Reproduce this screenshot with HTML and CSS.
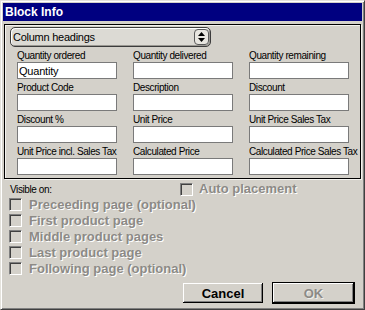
FILE: index.html
```html
<!DOCTYPE html>
<html lang="en">
<head>
    <meta charset="UTF-8">
    <title>Block Info</title>
    <link rel="stylesheet" href="styles.css">
</head>
<body>
    <div class="window">
        <div class="titlebar">Block Info</div>

        <div class="group">
            <div class="popup">
                <span class="popup-text">Column headings</span>
                <span class="popup-arrows">
                    <svg width="9" height="12" viewBox="0 0 9 12">
                        <polygon points="4.5,1 8,5 1,5" fill="#000"/>
                        <polygon points="1,7 8,7 4.5,11" fill="#000"/>
                    </svg>
                </span>
            </div>

            <div class="fields">
                <div class="field"><label>Quantity ordered</label><input type="text" value="Quantity"></div>
                <div class="field"><label>Quantity delivered</label><input type="text"></div>
                <div class="field"><label>Quantity remaining</label><input type="text"></div>
                <div class="field"><label>Product Code</label><input type="text"></div>
                <div class="field"><label>Description</label><input type="text"></div>
                <div class="field"><label>Discount</label><input type="text"></div>
                <div class="field"><label>Discount %</label><input type="text"></div>
                <div class="field"><label>Unit Price</label><input type="text"></div>
                <div class="field"><label>Unit Price Sales Tax</label><input type="text"></div>
                <div class="field"><label>Unit Price incl. Sales Tax</label><input type="text"></div>
                <div class="field"><label>Calculated Price</label><input type="text"></div>
                <div class="field"><label>Calculated Price Sales Tax</label><input type="text"></div>
            </div>
        </div>

        <div class="visible-row">
            <span class="visible-label">Visible on:</span>
            <div class="check"><span class="box"></span>Auto placement</div>
        </div>

        <div class="checks">
            <div class="check"><span class="box"></span>Preceeding page (optional)</div>
            <div class="check"><span class="box"></span>First product page</div>
            <div class="check"><span class="box"></span>Middle product pages</div>
            <div class="check"><span class="box"></span>Last product page</div>
            <div class="check"><span class="box"></span>Following page (optional)</div>
        </div>

        <div class="buttons">
            <button class="btn">Cancel</button>
            <button class="btn default" disabled>OK</button>
        </div>
    </div>
</body>
</html>
```

FILE: styles.css
```css
/* Dialog window */
body {
    margin: 0;
    padding: 0;
    font-family: 'Liberation Sans', Arial, sans-serif;
    background: #d4d1ca;
}

.window {
    width: 365px;
    height: 310px;
    box-sizing: border-box;
    padding: 2px;
    border: 1px solid;
    border-color: #e4e2dc #404040 #404040 #e4e2dc;
    box-shadow: inset 1px 1px #fff, inset -1px -1px #808080;
    background: #d4d1ca;
    overflow: hidden;
}

.titlebar {
    height: 18px;
    line-height: 18px;
    padding-left: 2px;
    background: #000080;
    color: #fff;
    font-weight: bold;
    font-size: 12px;
}

/* Column headings box */
.group {
    margin: 3px 1px 0 1px;
    padding: 2px 0 3px 0;
    border: 1px solid #000;
    box-shadow: 1px 1px 0 #f4f3ef, inset 1px 1px 0 #f4f3ef;
}

.popup {
    display: flex;
    align-items: center;
    justify-content: space-between;
    width: 201px;
    height: 20px;
    margin-left: 5px;
    box-sizing: border-box;
    border: 1px solid #3c3c3c;
    border-radius: 5px;
    background: #dcdad4;
    box-shadow: inset 1px 1px #fff, inset -1px -1px #9a9892;
}

.popup-text {
    padding-left: 2px;
    font-size: 11px;
    letter-spacing: -0.25px;
    color: #000;
}

.popup-arrows {
    display: flex;
    align-items: center;
    justify-content: center;
    width: 15px;
    height: 16px;
    margin-right: 1px;
    box-sizing: border-box;
    border: 1px solid #5a5a5a;
    border-radius: 4px;
    background: #e8e6e0;
}

.fields {
    display: grid;
    grid-template-columns: repeat(3, 100px);
    column-gap: 16px;
    row-gap: 2px;
    margin-top: 2px;
    padding-left: 12px;
}

.field label {
    display: block;
    width: 109px;
    height: 13px;
    line-height: 13px;
    font-size: 10px;
    letter-spacing: -0.4px;
    white-space: nowrap;
    overflow: hidden;
    color: #000;
}

.field input {
    display: block;
    width: 100px;
    height: 17px;
    margin: 0;
    padding: 0 1px;
    box-sizing: border-box;
    border: 1px solid #7a7a7a;
    background: #fff;
    font-family: 'Liberation Sans', Arial, sans-serif;
    font-size: 11px;
    letter-spacing: -0.2px;
    color: #000;
    outline: none;
}

/* Visibility checkboxes */
.visible-row {
    display: flex;
    align-items: baseline;
    margin-top: 2px;
    padding-left: 7px;
}

.visible-label {
    width: 170px;
    line-height: 13px;
    font-size: 10px;
    letter-spacing: -0.4px;
    color: #000;
}

.checks {
    margin-top: 0;
    padding-left: 6px;
}

.check {
    display: block;
    line-height: 16px;
    font-size: 13px;
    font-weight: bold;
    color: #8c8a86;
    text-shadow: 1px 1px 0 #fff;
    white-space: nowrap;
}

.box {
    display: inline-block;
    vertical-align: top;
    width: 13px;
    height: 13px;
    margin: 1px 7px 0 0;
    box-sizing: border-box;
    border: 1px solid;
    border-color: #808080 #fff #fff #808080;
    box-shadow: inset 1px 1px #404040;
}

.visible-row .box {
    margin-top: 2px;
    margin-right: 6px;
}

/* Buttons */
.buttons {
    display: flex;
    align-items: center;
    justify-content: flex-end;
    gap: 10px;
    height: 22px;
    margin-top: 5px;
    padding-right: 8px;
}

.btn {
    width: 80px;
    height: 20px;
    margin: 0;
    padding: 0;
    border: none;
    background: #d4d1ca;
    box-shadow: inset -1px -1px #000, inset 1px 1px #fff, inset -2px -2px #808080;
    font-family: 'Liberation Sans', Arial, sans-serif;
    font-size: 13px;
    font-weight: bold;
    color: #000;
}

.btn.default {
    width: 81px;
    outline: 1px solid #000;
    color: #8c8a86;
    text-shadow: 1px 1px 0 #f0efeb;
}
```
